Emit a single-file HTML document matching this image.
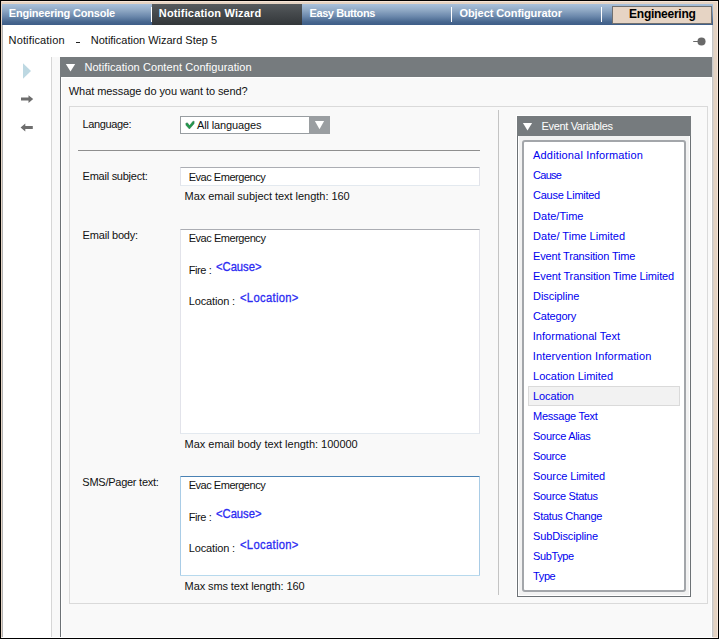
<!DOCTYPE html>
<html><head><meta charset="utf-8"><title>Notification Wizard</title>
<style>
html,body{margin:0;padding:0;}
body{width:719px;height:639px;overflow:hidden;background:#000;position:relative;font-family:"Liberation Sans", sans-serif;}
.a{position:absolute;}
.t{position:absolute;white-space:nowrap;line-height:1;margin:0;padding:0;}
</style></head>
<body>
<div class="a" style="left:1px;top:1px;width:717px;height:637px;background:#e4d3c3;"></div>
<div class="a" style="left:1px;top:1px;width:717px;height:1px;background:#f6e5d7;"></div>
<div class="a" style="left:1px;top:1px;width:1px;height:637px;background:#e6d5c5;"></div>
<div class="a" style="left:717px;top:1px;width:1px;height:637px;background:#f6e5d7;"></div>
<div class="a" style="left:1px;top:637px;width:717px;height:1px;background:#f9ece1;"></div>
<div class="a" style="left:2px;top:4px;width:711px;height:634px;background:#ffffff;"></div>
<div class="a" style="left:712px;top:25px;width:1px;height:612px;background:#c6c6c6;"></div>
<div class="a" style="left:2px;top:25px;width:1px;height:612px;background:#b4b4b4;"></div>
<div class="a" style="left:713px;top:25px;width:1px;height:612px;background:#d9d1ca;"></div>
<div class="a" style="left:2px;top:4px;width:711px;height:21px;background:linear-gradient(#aac2dc 0%,#8fa8c4 30%,#6a87ab 60%,#48678f 85%,#3e5e88 100%);"></div>
<div class="a" style="left:152px;top:4px;width:150px;height:21px;background:linear-gradient(#565b5e 0%,#45494c 45%,#33373a 100%);"></div>
<div class="a" style="left:151px;top:7px;width:1px;height:15px;background:#ffffff;"></div>
<div class="a" style="left:451px;top:7px;width:1px;height:15px;background:#ffffff;"></div>
<div class="a" style="left:601px;top:7px;width:1px;height:15px;background:#ffffff;"></div>
<div class="a" style="left:612px;top:6px;width:100px;height:18px;background:#e6d4c4;border:1px solid #707070;box-sizing:border-box;"></div>
<svg class="a" style="left:690px;top:35px" width="20" height="14" viewBox="0 0 20 14"><circle cx="11.5" cy="6.5" r="4.05" fill="#696969"/><rect x="3.2" y="6" width="5" height="1" fill="#696969"/></svg>
<div class="a" style="left:51px;top:57px;width:1px;height:580px;background:#d6d6d6;"></div>
<div class="a" style="left:52px;top:57px;width:8px;height:580px;background:#f8f8f8;"></div>
<div class="a" style="left:60px;top:57px;width:652px;height:580px;background:#f9f9f9;"></div>
<div class="a" style="left:711px;top:77px;width:1px;height:560px;background:#ffffff;"></div>
<div class="a" style="left:61px;top:77px;width:1px;height:560px;background:#ffffff;"></div>
<div class="a" style="left:61px;top:77px;width:650px;height:1px;background:#ffffff;"></div>
<div class="a" style="left:60px;top:57px;width:1px;height:580px;background:#6d7276;"></div>
<div class="a" style="left:60px;top:57px;width:652px;height:20px;background:#767b7e;"></div>
<svg class="a" style="left:64px;top:62px" width="14" height="12" viewBox="0 0 14 12"><path d="M1.8 2 L11.2 2 L6.5 9.4 Z" fill="#fff"/></svg>
<svg class="a" style="left:18px;top:60px" width="20" height="80" viewBox="0 0 20 80"><path d="M5 3.2 L13 11 L5 18.8 Z" fill="#bdd8e2"/><path d="M3 37.6 H10.5 V35.2 L15.2 39.1 L10.5 43 V40.6 H3 Z" fill="#6e6e6e"/><path d="M14.8 66 H7.3 V63.6 L2.6 67.5 L7.3 71.4 V69 H14.8 Z" fill="#6e6e6e"/></svg>
<div class="a" style="left:69px;top:106px;width:639px;height:498px;border:1px solid #dadada;box-sizing:border-box;background:#f9f9f9;"></div>
<div class="a" style="left:180px;top:116px;width:150px;height:18px;background:#fff;border:1px solid #989da1;box-sizing:border-box;"></div>
<div class="a" style="left:309px;top:116px;width:21px;height:18px;background:#9a9ea1;"></div>
<svg class="a" style="left:309px;top:116px" width="21" height="18" viewBox="0 0 21 18"><path d="M5.9 5 L15.1 5 L10.5 13.3 Z" fill="#fff"/></svg>
<svg class="a" style="left:184px;top:119px" width="12" height="12" viewBox="0 0 12 12"><path d="M1.8 4.4 L3.3 3.8 L5.6 6.6 L9.0 2.2 L10.2 2.4 L10.0 4.8 L5.4 10.0 L2.0 6.2 Z" fill="#229a4c" stroke="#2f6a4a" stroke-width="0.5"/></svg>
<div class="a" style="left:78px;top:150px;width:402px;height:1px;background:#8f8f8f;"></div>
<div class="a" style="left:180px;top:167px;width:300px;height:19px;background:#fff;border:1px solid #e2e3ea;border-top-color:#abadb3;border-bottom-color:#e3e9ef;box-sizing:border-box;"></div>
<div class="a" style="left:180px;top:229px;width:300px;height:205px;background:#fff;border:1px solid #e2e3ea;border-top-color:#abadb3;border-bottom-color:#e3e9ef;box-sizing:border-box;"></div>
<div class="a" style="left:180px;top:476px;width:300px;height:100px;background:#fff;border:1px solid #a9cce6;border-top-color:#4a82b4;border-bottom-color:#b7d9ed;border-radius:1px;box-sizing:border-box;"></div>
<div class="a" style="left:498px;top:110px;width:1px;height:485px;background:#c4c4c4;"></div>
<div class="a" style="left:517px;top:116px;width:174px;height:481px;background:#f2f2f2;border:1px solid #6d7276;box-sizing:border-box;box-shadow:inset 0 0 0 1px #ffffff,-1px -1px 0 #ffffff;"></div>
<div class="a" style="left:517px;top:116px;width:174px;height:20px;background:#767b7e;"></div>
<svg class="a" style="left:521px;top:121px" width="14" height="12" viewBox="0 0 14 12"><path d="M1.9 1.9 L11.1 1.9 L6.5 9.4 Z" fill="#fff"/></svg>
<div class="a" style="left:522px;top:140px;width:164px;height:452px;background:#fff;border:2px solid #a3a6aa;border-radius:3px;box-sizing:border-box;"></div>
<div class="a" style="left:528px;top:386px;width:152px;height:20px;background:#f2f2f2;border:1px solid #dadada;box-sizing:border-box;"></div>
<div class="a" style="left:76.4px;top:42px;width:3.5px;height:1px;background:#222;"></div>
<span id="t1" class="t" style="left:8.80px;top:8.00px;font-size:11px;font-weight:bold;color:#ffffff;letter-spacing:-0.205px">Engineering Console</span>
<span id="t2" class="t" style="left:158.80px;top:8.00px;font-size:11px;font-weight:bold;color:#ffffff;letter-spacing:0.162px">Notification Wizard</span>
<span id="t3" class="t" style="left:309.50px;top:8.00px;font-size:11px;font-weight:bold;color:#ffffff;letter-spacing:-0.407px">Easy Buttons</span>
<span id="t4" class="t" style="left:459.50px;top:8.00px;font-size:11px;font-weight:bold;color:#ffffff;letter-spacing:-0.078px">Object Configurator</span>
<span id="t5" class="t" style="left:629.10px;top:8.00px;font-size:12px;font-weight:bold;color:#000000;letter-spacing:-0.261px">Engineering</span>
<span id="b1" class="t" style="left:8.60px;top:35.00px;font-size:11px;font-weight:normal;color:#111111;letter-spacing:0.137px">Notification</span>
<span id="b3" class="t" style="left:90.80px;top:35.00px;font-size:11px;font-weight:normal;color:#111111;letter-spacing:-0.009px">Notification Wizard Step 5</span>
<span id="h1" class="t" style="left:84.40px;top:62.00px;font-size:11px;font-weight:normal;color:#ffffff;letter-spacing:0.083px">Notification Content Configuration</span>
<span id="q1" class="t" style="left:68.80px;top:86.00px;font-size:11px;font-weight:normal;color:#111111;letter-spacing:-0.068px">What message do you want to send?</span>
<span id="l1" class="t" style="left:82.50px;top:119.00px;font-size:11px;font-weight:normal;color:#111111;letter-spacing:-0.355px">Language:</span>
<span id="l2" class="t" style="left:82.60px;top:171.00px;font-size:11px;font-weight:normal;color:#111111;letter-spacing:-0.255px">Email subject:</span>
<span id="l3" class="t" style="left:82.60px;top:230.00px;font-size:11px;font-weight:normal;color:#111111;letter-spacing:-0.191px">Email body:</span>
<span id="l4" class="t" style="left:82.30px;top:477.00px;font-size:11px;font-weight:normal;color:#111111;letter-spacing:-0.252px">SMS/Pager text:</span>
<span id="c1" class="t" style="left:197.00px;top:120.00px;font-size:11px;font-weight:normal;color:#111111;letter-spacing:-0.129px">All languages</span>
<span id="s1" class="t" style="left:188.70px;top:172.00px;font-size:11px;font-weight:normal;color:#111111;letter-spacing:-0.469px">Evac Emergency</span>
<span id="m1" class="t" style="left:184.50px;top:191.00px;font-size:11px;font-weight:normal;color:#111111;letter-spacing:-0.033px">Max email subject text length: 160</span>
<span id="e1" class="t" style="left:188.70px;top:233.00px;font-size:11px;font-weight:normal;color:#111111;letter-spacing:-0.457px">Evac Emergency</span>
<span id="e2" class="t" style="left:188.80px;top:265.00px;font-size:11px;font-weight:normal;color:#111111;letter-spacing:-0.420px">Fire :</span>
<span id="e3" class="t" style="left:216.20px;top:261.00px;font-size:12.5px;font-weight:normal;color:#2b2bf2;letter-spacing:-0.035px;transform:scaleX(0.9);transform-origin:0 0;-webkit-text-stroke:0.3px #2b2bf2">&lt;Cause&gt;</span>
<span id="e4" class="t" style="left:188.80px;top:296.00px;font-size:11px;font-weight:normal;color:#111111;letter-spacing:-0.149px">Location :</span>
<span id="e5" class="t" style="left:239.70px;top:292.00px;font-size:12.5px;font-weight:normal;color:#2b2bf2;letter-spacing:0.333px;transform:scaleX(0.9);transform-origin:0 0;-webkit-text-stroke:0.3px #2b2bf2">&lt;Location&gt;</span>
<span id="m2" class="t" style="left:184.50px;top:439.00px;font-size:11px;font-weight:normal;color:#111111;letter-spacing:-0.014px">Max email body text length: 100000</span>
<span id="p1" class="t" style="left:188.70px;top:480.00px;font-size:11px;font-weight:normal;color:#111111;letter-spacing:-0.473px">Evac Emergency</span>
<span id="p2" class="t" style="left:188.80px;top:512.00px;font-size:11px;font-weight:normal;color:#111111;letter-spacing:-0.420px">Fire :</span>
<span id="p3" class="t" style="left:216.20px;top:508.00px;font-size:12.5px;font-weight:normal;color:#2b2bf2;letter-spacing:-0.035px;transform:scaleX(0.9);transform-origin:0 0;-webkit-text-stroke:0.3px #2b2bf2">&lt;Cause&gt;</span>
<span id="p4" class="t" style="left:188.80px;top:543.00px;font-size:11px;font-weight:normal;color:#111111;letter-spacing:-0.149px">Location :</span>
<span id="p5" class="t" style="left:239.70px;top:539.00px;font-size:12.5px;font-weight:normal;color:#2b2bf2;letter-spacing:0.333px;transform:scaleX(0.9);transform-origin:0 0;-webkit-text-stroke:0.3px #2b2bf2">&lt;Location&gt;</span>
<span id="m3" class="t" style="left:184.60px;top:581.00px;font-size:11px;font-weight:normal;color:#111111;letter-spacing:-0.098px">Max sms text length: 160</span>
<span id="v0" class="t" style="left:541.50px;top:121.00px;font-size:11px;font-weight:normal;color:#ffffff;letter-spacing:-0.338px">Event Variables</span>
<span id="i0" class="t" style="left:533.10px;top:150.00px;font-size:11px;font-weight:normal;color:#0000ee;letter-spacing:0.158px">Additional Information</span>
<span id="i1" class="t" style="left:533.10px;top:170.00px;font-size:11px;font-weight:normal;color:#0000ee;letter-spacing:-0.745px">Cause</span>
<span id="i2" class="t" style="left:533.10px;top:190.00px;font-size:11px;font-weight:normal;color:#0000ee;letter-spacing:-0.266px">Cause Limited</span>
<span id="i3" class="t" style="left:533.10px;top:211.00px;font-size:11px;font-weight:normal;color:#0000ee;letter-spacing:-0.001px">Date/Time</span>
<span id="i4" class="t" style="left:533.10px;top:231.00px;font-size:11px;font-weight:normal;color:#0000ee;letter-spacing:0.019px">Date/ Time Limited</span>
<span id="i5" class="t" style="left:533.10px;top:251.00px;font-size:11px;font-weight:normal;color:#0000ee;letter-spacing:-0.172px">Event Transition Time</span>
<span id="i6" class="t" style="left:533.10px;top:271.00px;font-size:11px;font-weight:normal;color:#0000ee;letter-spacing:-0.113px">Event Transition Time Limited</span>
<span id="i7" class="t" style="left:533.10px;top:291.00px;font-size:11px;font-weight:normal;color:#0000ee;letter-spacing:-0.084px">Discipline</span>
<span id="i8" class="t" style="left:533.10px;top:311.00px;font-size:11px;font-weight:normal;color:#0000ee;letter-spacing:-0.205px">Category</span>
<span id="i9" class="t" style="left:532.70px;top:331.00px;font-size:11px;font-weight:normal;color:#0000ee;letter-spacing:0.043px">Informational Text</span>
<span id="i10" class="t" style="left:532.70px;top:351.00px;font-size:11px;font-weight:normal;color:#0000ee;letter-spacing:0.133px">Intervention Information</span>
<span id="i11" class="t" style="left:533.10px;top:371.00px;font-size:11px;font-weight:normal;color:#0000ee;letter-spacing:-0.012px">Location Limited</span>
<span id="i12" class="t" style="left:533.10px;top:391.00px;font-size:11px;font-weight:normal;color:#0000ee;letter-spacing:-0.110px">Location</span>
<span id="i13" class="t" style="left:533.10px;top:411.00px;font-size:11px;font-weight:normal;color:#0000ee;letter-spacing:-0.273px">Message Text</span>
<span id="i14" class="t" style="left:533.10px;top:431.00px;font-size:11px;font-weight:normal;color:#0000ee;letter-spacing:-0.323px">Source Alias</span>
<span id="i15" class="t" style="left:533.10px;top:451.00px;font-size:11px;font-weight:normal;color:#0000ee;letter-spacing:-0.367px">Source</span>
<span id="i16" class="t" style="left:533.10px;top:471.00px;font-size:11px;font-weight:normal;color:#0000ee;letter-spacing:-0.112px">Source Limited</span>
<span id="i17" class="t" style="left:533.10px;top:491.00px;font-size:11px;font-weight:normal;color:#0000ee;letter-spacing:-0.341px">Source Status</span>
<span id="i18" class="t" style="left:533.10px;top:511.00px;font-size:11px;font-weight:normal;color:#0000ee;letter-spacing:-0.296px">Status Change</span>
<span id="i19" class="t" style="left:533.10px;top:531.00px;font-size:11px;font-weight:normal;color:#0000ee;letter-spacing:-0.127px">SubDiscipline</span>
<span id="i20" class="t" style="left:533.10px;top:551.00px;font-size:11px;font-weight:normal;color:#0000ee;letter-spacing:-0.400px">SubType</span>
<span id="i21" class="t" style="left:533.10px;top:571.00px;font-size:11px;font-weight:normal;color:#0000ee;letter-spacing:-0.410px">Type</span>
</body></html>
